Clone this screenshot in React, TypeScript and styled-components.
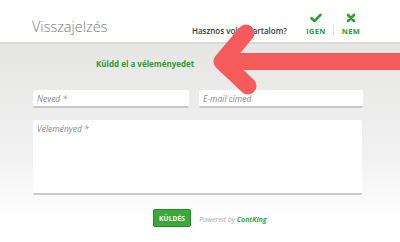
import React from 'react';
import styled, { createGlobalStyle } from 'styled-components';

const GlobalStyle = createGlobalStyle`
  html, body {
    margin: 0;
    padding: 0;
    background: #fff;
  }
  * {
    box-sizing: border-box;
  }
`;

const green = '#2e9c2e';

const Page = styled.div`
  position: relative;
  width: 400px;
  height: 242px;
  overflow: hidden;
  font-family: 'Open Sans', 'Liberation Sans', sans-serif;
  background: #fff;
`;

const Header = styled.header`
  display: flex;
  align-items: flex-end;
  justify-content: space-between;
  height: 44px;
  padding: 0 38px 6px 32px;
  border-bottom: 2px solid #d9d9d7;
`;

const Title = styled.h1`
  margin: 0;
  font-size: 14.5px;
  font-weight: 300;
  color: #7a7a7a;
  line-height: 1;
  padding-bottom: 2px;
`;

const Feedback = styled.div`
  display: flex;
  align-items: flex-end;
`;

const Question = styled.span`
  font-size: 8px;
  font-weight: 600;
  color: #3a3a3a;
  margin-right: 18px;
  line-height: 1;
  padding-bottom: 1px;
`;

const Vote = styled.div`
  display: flex;
  flex-direction: column;
  align-items: center;
  gap: 5px;
  width: 22px;
  color: ${green};
  font-size: 7.5px;
  font-weight: 700;
  letter-spacing: 0.3px;
  line-height: 1;
  padding-bottom: 1px;
`;

const Divider = styled.div`
  width: 1px;
  height: 12px;
  background: #e4e4e4;
  margin: 0 6px 0 6px;
  align-self: flex-end;
`;

const Body = styled.main`
  height: 198px;
  padding: 14px 38px 0 33px;
  background: linear-gradient(#e6e6e5 0%, #f2f2f2 60%, #ffffff 90%);
`;

const Lead = styled.p`
  margin: 0 0 20px 63px;
  font-size: 8px;
  font-weight: 700;
  color: ${green};
  line-height: 12px;
`;

const Row = styled.div`
  display: grid;
  grid-template-columns: 156px 164px;
  gap: 10px;
  margin-bottom: 12px;
`;

const fieldStyles = `
  display: block;
  width: 100%;
  border: none;
  border-bottom: 2px solid #c8c8c6;
  border-radius: 2px;
  background: #fff;
  font-family: 'Open Sans', 'Liberation Sans', sans-serif;
  font-size: 8.5px;
  font-style: italic;
  color: #555;
  padding: 0 4px;
  outline: none;
  &::placeholder {
    color: #8a8a8a;
  }
`;

const Input = styled.input`
  ${fieldStyles}
  height: 18px;
`;

const TextArea = styled.textarea`
  ${fieldStyles}
  height: 75px;
  resize: none;
  padding-top: 3px;
`;

const Footer = styled.div`
  display: flex;
  align-items: center;
  margin-top: 14px;
  padding-left: 120px;
  gap: 8px;
`;

const SendButton = styled.button`
  height: 18px;
  padding: 0 5px;
  border: 1px solid #248a24;
  border-radius: 2px;
  background: #3aa83a;
  color: #fff;
  font-family: 'Open Sans', 'Liberation Sans', sans-serif;
  font-size: 6.5px;
  font-weight: 700;
  letter-spacing: 0.2px;
`;

const Powered = styled.span`
  font-size: 7px;
  font-style: italic;
  color: #aaa;
  padding-top: 2px;
`;

const Brand = styled.span`
  color: #3aa83a;
  font-weight: 700;
`;

const ArrowOverlay = styled.svg`
  position: absolute;
  left: 0;
  top: 0;
  pointer-events: none;
`;

function Check() {
  return (
    <svg width="12" height="10" viewBox="0 0 12 10">
      <path d="M1.5 5.2 L4.5 8 L10.5 1.8" fill="none" stroke={green} strokeWidth="2.6" strokeLinecap="round" strokeLinejoin="round" />
    </svg>
  );
}

function Cross() {
  return (
    <svg width="10" height="10" viewBox="0 0 10 10">
      <path d="M2 2 L8 8 M8 2 L2 8" fill="none" stroke={green} strokeWidth="2.6" strokeLinecap="round" />
    </svg>
  );
}

export default function App() {
  return (
    <Page>
      <GlobalStyle />
      <Header>
        <Title>Visszajelzés</Title>
        <Feedback>
          <Question>Hasznos volt a tartalom?</Question>
          <Vote>
            <Check />
            IGEN
          </Vote>
          <Divider />
          <Vote>
            <Cross />
            NEM
          </Vote>
        </Feedback>
      </Header>
      <Body>
        <Lead>Küldd el a véleményedet</Lead>
        <Row>
          <Input placeholder="Neved *" />
          <Input placeholder="E-mail címed" />
        </Row>
        <TextArea placeholder="Véleményed *" />
        <Footer>
          <SendButton>KÜLDÉS</SendButton>
          <Powered>
            Powered by <Brand>ContKing</Brand>
          </Powered>
        </Footer>
      </Body>
      <ArrowOverlay width="400" height="242" viewBox="0 0 400 242">
        <path
          d="M410 61.5 H222 M246 33 L222 61.5 L248 86"
          fill="none"
          stroke="#f65b5c"
          strokeWidth="17"
          strokeLinecap="round"
          strokeLinejoin="round"
        />
      </ArrowOverlay>
    </Page>
  );
}
